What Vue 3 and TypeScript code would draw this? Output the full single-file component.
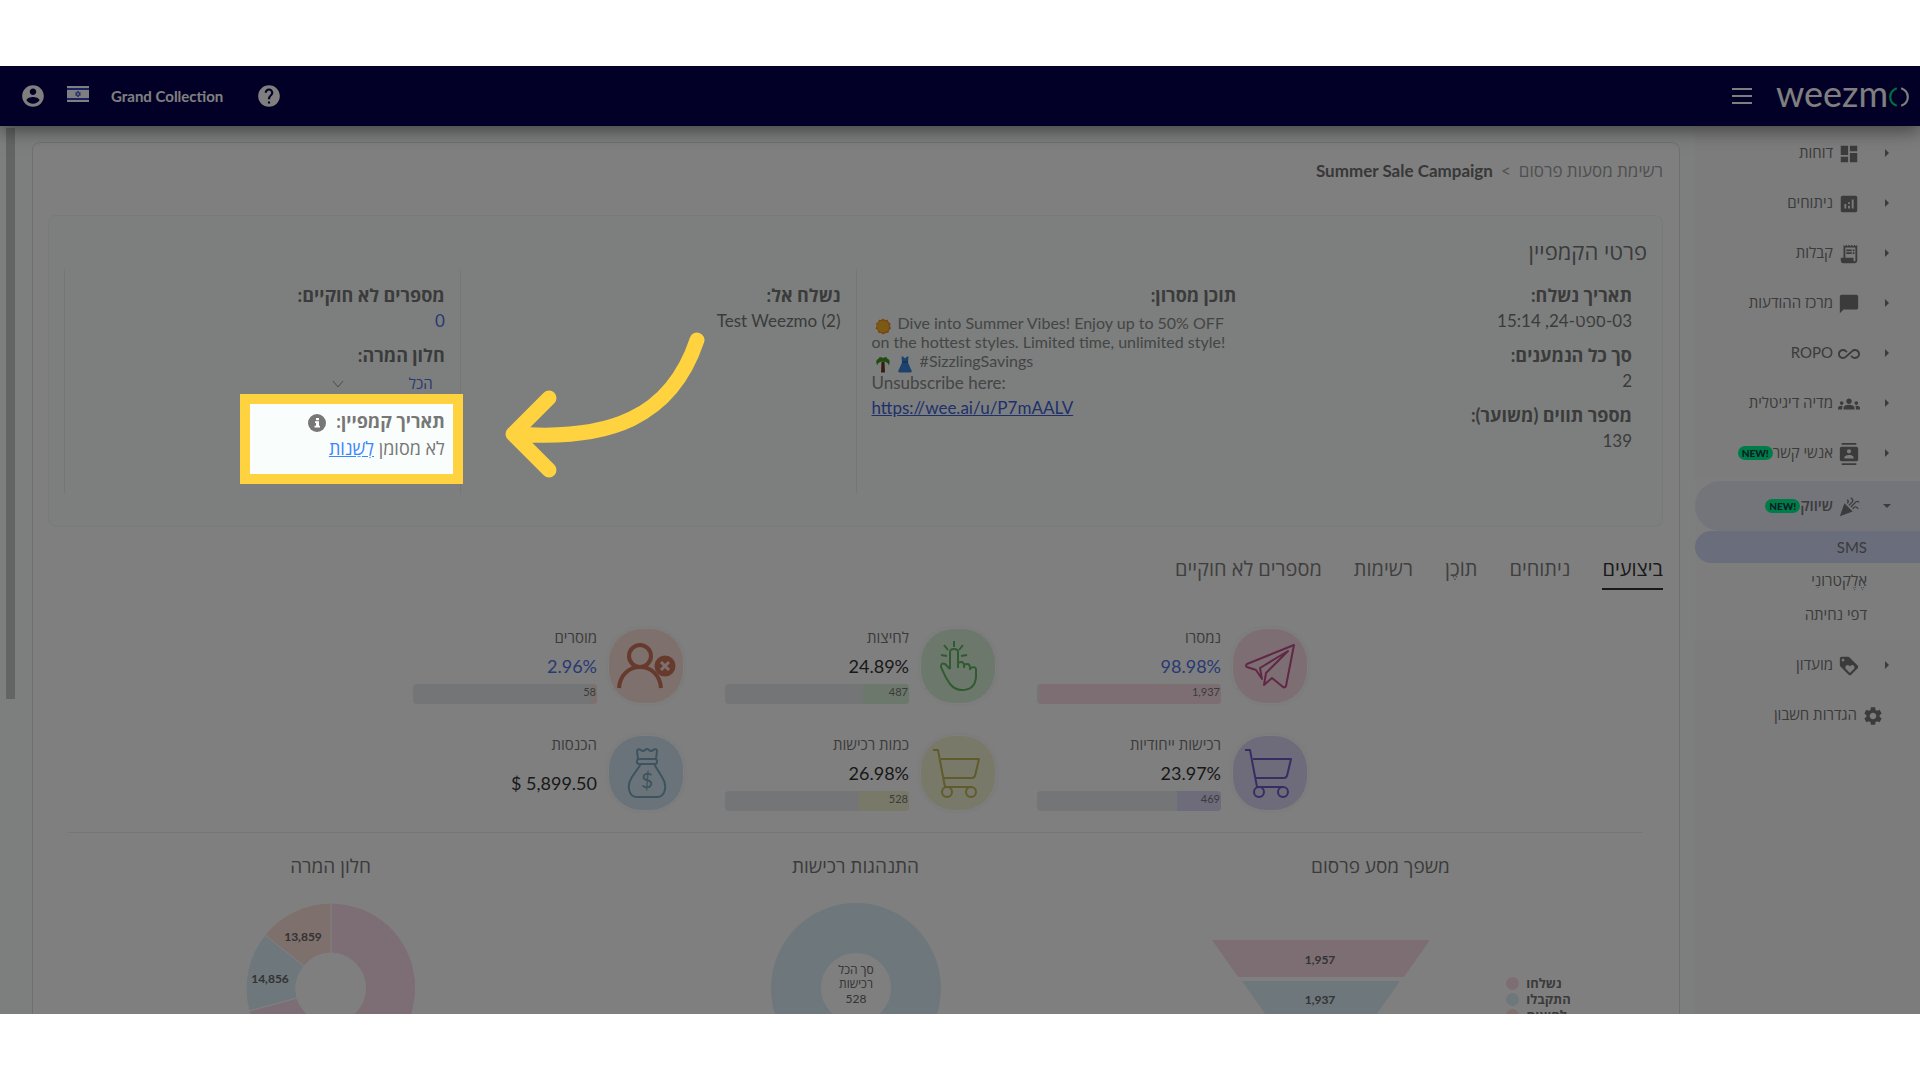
<script setup lang="ts">
interface NavItem {
  label: string
  icon: string
  badge?: boolean
}

interface Metric {
  label: string
  value: string
  kind: string
  count?: string
  share: number
  link?: boolean
}

const icons: Record<string, string> = {
  account:
    'M12 2C6.48 2 2 6.48 2 12s4.48 10 10 10 10-4.48 10-10S17.52 2 12 2zm0 3c1.66 0 3 1.34 3 3s-1.34 3-3 3-3-1.34-3-3 1.34-3 3-3zm0 14.2c-2.5 0-4.71-1.28-6-3.22.03-1.99 4-3.08 6-3.08 1.99 0 5.97 1.09 6 3.08-1.29 1.94-3.5 3.22-6 3.22z',
  help: 'M12 2C6.48 2 2 6.48 2 12s4.48 10 10 10 10-4.48 10-10S17.52 2 12 2zm1 17h-2v-2h2v2zm2.07-7.75l-.9.92C13.45 12.9 13 13.5 13 15h-2v-.5c0-1.1.45-2.1 1.17-2.83l1.24-1.26c.37-.36.59-.86.59-1.41 0-1.1-.9-2-2-2s-2 .9-2 2H8c0-2.21 1.79-4 4-4s4 1.79 4 4c0 .88-.36 1.68-.93 2.25z',
  dashboard: 'M3 13h8V3H3v10zm0 8h8v-6H3v6zm10 0h8V11h-8v10zm0-18v6h8V3h-8z',
  analytics:
    'M19 3H5c-1.1 0-2 .9-2 2v14c0 1.1.9 2 2 2h14c1.1 0 2-.9 2-2V5c0-1.1-.9-2-2-2zM9 17H7v-5h2v5zm4 0h-2v-3h2v3zm0-5h-2v-2h2v2zm4 5h-2V7h2v10z',
  receipt:
    'M19.5 3.5L18 2l-1.5 1.5L15 2l-1.5 1.5L12 2l-1.5 1.5L9 2 7.5 3.5 6 2v14H3v3c0 1.66 1.34 3 3 3h12c1.66 0 3-1.34 3-3V2l-1.5 1.5zM19 19c0 .55-.45 1-1 1s-1-.45-1-1v-3H8V5h11v14zM9 7h6v2H9zM16 7h2v2h-2zM9 10h6v2H9zM16 10h2v2h-2z',
  chat: 'M20 2H4c-1.1 0-1.99.9-1.99 2L2 22l4-4h14c1.1 0 2-.9 2-2V4c0-1.1-.9-2-2-2z',
  infinity:
    'M18.6 6.62c-1.44 0-2.8.56-3.77 1.53L12 10.66 10.48 12h.01L7.8 14.39c-.64.64-1.49.99-2.4.99-1.87 0-3.39-1.51-3.39-3.38S3.53 8.62 5.4 8.62c.91 0 1.76.35 2.44 1.03l1.13 1 1.51-1.34L9.22 8.2C8.2 7.18 6.84 6.62 5.4 6.62 2.42 6.62 0 9.04 0 12s2.42 5.38 5.4 5.38c1.44 0 2.8-.56 3.77-1.53l2.83-2.5.01.01L13.52 12h-.01l2.69-2.39c.64-.64 1.49-.99 2.4-.99 1.87 0 3.39 1.51 3.39 3.38s-1.52 3.38-3.39 3.38c-.9 0-1.76-.35-2.44-1.03l-1.14-1.01-1.51 1.34 1.27 1.12c1.02 1.01 2.37 1.57 3.82 1.57 2.98 0 5.4-2.41 5.4-5.38s-2.42-5.37-5.4-5.37z',
  groups:
    'M12 12.75c1.63 0 3.07.39 4.24.9 1.08.48 1.76 1.56 1.76 2.73V18H6v-1.61c0-1.18.68-2.26 1.76-2.73 1.17-.52 2.61-.91 4.24-.91zM4 13c1.1 0 2-.9 2-2s-.9-2-2-2-2 .9-2 2 .9 2 2 2zm1.13 1.1c-.37-.06-.74-.1-1.13-.1-.99 0-1.93.21-2.78.58C.48 14.9 0 15.62 0 16.43V18h4.5v-1.61c0-.83.23-1.61.63-2.29zM20 13c1.1 0 2-.9 2-2s-.9-2-2-2-2 .9-2 2 .9 2 2 2zm4 3.43c0-.81-.48-1.53-1.22-1.85-.85-.37-1.79-.58-2.78-.58-.39 0-.76.04-1.13.1.4.68.63 1.46.63 2.29V18H24v-1.57zM12 6c1.66 0 3 1.34 3 3s-1.34 3-3 3-3-1.34-3-3 1.34-3 3-3z',
  contacts:
    'M20 0H4v2h16V0zM4 24h16v-2H4v2zM20 4H4c-1.1 0-2 .9-2 2v12c0 1.1.9 2 2 2h16c1.1 0 2-.9 2-2V6c0-1.1-.9-2-2-2zm-8 2.75c1.24 0 2.25 1.01 2.25 2.25s-1.01 2.25-2.25 2.25S9.75 10.24 9.75 9 10.76 6.75 12 6.75zM17 17H7v-1.5c0-1.67 3.33-2.5 5-2.5s5 .83 5 2.5V17z',
  celebration:
    'M2 22l14-5-9-9zM14.53 12.53l5.59-5.59c.49-.49 1.28-.49 1.77 0l.59.59 1.06-1.06-.59-.59c-1.07-1.07-2.82-1.07-3.89 0l-5.59 5.59 1.06 1.06zM10.06 6.88l-.59.59 1.06 1.06.59-.59c1.07-1.07 1.07-2.82 0-3.89l-.59-.59-1.06 1.07.59.59c.48.48.48 1.28 0 1.76zM17.06 11.88l-1.59 1.59 1.06 1.06 1.59-1.59c.49-.49 1.28-.49 1.77 0l1.61 1.61 1.06-1.06-1.61-1.61c-1.08-1.07-2.82-1.07-3.89 0zM15.06 5.88l-3.59 3.59 1.06 1.06 3.59-3.59c1.07-1.07 1.07-2.82 0-3.89l-1.59-1.59-1.06 1.06 1.59 1.59c.48.49.48 1.29 0 1.77z',
  loyalty:
    'M21.41 11.58l-9-9C12.05 2.22 11.55 2 11 2H4c-1.1 0-2 .9-2 2v7c0 .55.22 1.05.59 1.42l9 9c.36.36.86.58 1.41.58.55 0 1.05-.22 1.41-.59l7-7c.37-.36.59-.86.59-1.41 0-.55-.23-1.06-.59-1.42zM5.5 7C4.67 7 4 6.33 4 5.5S4.67 4 5.5 4 7 4.67 7 5.5 6.33 7 5.5 7zm11.77 8.27L13 19.54l-4.27-4.27C8.28 14.81 8 14.19 8 13.5c0-1.38 1.12-2.5 2.5-2.5.69 0 1.32.28 1.77.74l.73.72.73-.73c.45-.45 1.08-.73 1.77-.73 1.38 0 2.5 1.12 2.5 2.5 0 .69-.28 1.32-.73 1.77z',
  settings:
    'M19.14 12.94c.04-.3.06-.61.06-.94 0-.32-.02-.64-.07-.94l2.03-1.58c.18-.14.23-.41.12-.61l-1.92-3.32c-.12-.22-.37-.29-.59-.22l-2.39.96c-.5-.38-1.03-.7-1.62-.94l-.36-2.54c-.04-.24-.24-.41-.48-.41h-3.84c-.24 0-.43.17-.47.41l-.36 2.54c-.59.24-1.13.57-1.62.94l-2.39-.96c-.22-.08-.47 0-.59.22L2.74 8.87c-.12.21-.08.47.12.61l2.03 1.58c-.05.3-.09.63-.09.94s.02.64.07.94l-2.03 1.58c-.18.14-.23.41-.12.61l1.92 3.32c.12.22.37.29.59.22l2.39-.96c.5.38 1.03.7 1.62.94l.36 2.54c.05.24.24.41.48.41h3.84c.24 0 .44-.17.47-.41l.36-2.54c.59-.24 1.13-.56 1.62-.94l2.39.96c.22.08.47 0 .59-.22l1.92-3.32c.12-.22.07-.47-.12-.61l-2.01-1.58zM12 15.6c-1.98 0-3.6-1.62-3.6-3.6s1.62-3.6 3.6-3.6 3.6 1.62 3.6 3.6-1.62 3.6-3.6 3.6z',
}

const navItems: NavItem[] = [
  { label: 'דוחות', icon: 'dashboard' },
  { label: 'ניתוחים', icon: 'analytics' },
  { label: 'קבלות', icon: 'receipt' },
  { label: 'מרכז ההודעות', icon: 'chat' },
  { label: 'ROPO', icon: 'infinity' },
  { label: 'מדיה דיגיטלית', icon: 'groups' },
  { label: 'אנשי קשר', icon: 'contacts', badge: true },
]

const subItems = ['SMS', 'אֶלֶקטרוֹנִי', 'דפי נחיתה']
const tabs = ['ביצועים', 'ניתוחים', 'תוֹכֶן', 'רשימות', 'מספרים לא חוקיים']

const metrics: Metric[] = [
  { label: 'נמסרו', value: '98.98%', kind: 'sent', count: '1,937', share: 99, link: true },
  { label: 'לחיצות', value: '24.89%', kind: 'clicks', count: '487', share: 25 },
  { label: 'מוסרים', value: '2.96%', kind: 'removed', count: '58', share: 3, link: true },
  { label: 'רכישות ייחודיות', value: '23.97%', kind: 'unique', count: '469', share: 24 },
  { label: 'כמות רכישות', value: '26.98%', kind: 'orders', count: '528', share: 27 },
  { label: 'הכנסות', value: '$ 5,899.50', kind: 'revenue', share: 0 },
]

const legend = [
  { label: 'נשלחו', tone: 'tone-pink' },
  { label: 'התקבלו', tone: 'tone-blue' },
  { label: 'לחיצות', tone: 'tone-coral' },
]
</script>

<template>
  <div class="stage">
    <header class="topbar">
      <div class="account">
        <button class="icon-btn" type="button" aria-label="Account">
          <svg class="i26" viewBox="0 0 24 24"><path :d="icons.account" /></svg>
        </button>
        <button class="icon-btn flag" type="button" aria-label="Language">
          <svg viewBox="0 0 22 16">
            <rect width="22" height="16" fill="#fff" />
            <rect y="2" width="22" height="2" fill="#2f45c8" />
            <rect y="12" width="22" height="2" fill="#2f45c8" />
            <path d="M11 5l2.4 4.2H8.600zM11 11L8.600 6.800h4.800z" fill="none" stroke="#2f45c8" stroke-width=".8" />
          </svg>
        </button>
        <span class="org">Grand Collection</span>
        <button class="icon-btn" type="button" aria-label="Help">
          <svg class="i26" viewBox="0 0 24 24"><path :d="icons.help" /></svg>
        </button>
      </div>
      <div class="brand">
        <button class="burger" type="button" aria-label="Menu"><i></i><i></i><i></i></button>
        <a class="logo" href="#">
          <span>weezm</span>
          <svg viewBox="0 0 20 20">
            <path d="M8 2C0 5 0 15 8 18" stroke="#00e083" />
            <path d="M12 2C20 5 20 15 12 18" stroke="#fff" />
          </svg>
        </a>
      </div>
    </header>

    <div class="body" dir="rtl">
      <nav class="sidebar">
        <a v-for="item in navItems" :key="item.label" class="nav-item" href="#">
          <i class="caret"></i>
          <svg viewBox="0 0 24 24"><path fill-rule="evenodd" :d="icons[item.icon]" /></svg>
          <span>{{ item.label }}</span>
          <em v-if="item.badge" class="badge" dir="ltr">NEW!</em>
        </a>
        <div class="nav-group">
          <a class="nav-item open" href="#">
            <i class="caret down"></i>
            <svg viewBox="0 0 24 24"><path :d="icons.celebration" /></svg>
            <span>שיווק</span>
            <em class="badge" dir="ltr">NEW!</em>
          </a>
          <a v-for="(sub, n) in subItems" :key="sub" class="sub-item" :class="{ current: n === 0 }" href="#">{{ sub }}</a>
        </div>
        <a class="nav-item" href="#">
          <i class="caret"></i>
          <svg viewBox="0 0 24 24"><path :d="icons.loyalty" /></svg>
          <span>מועדון</span>
        </a>
        <a class="nav-item leaf" href="#">
          <svg viewBox="0 0 24 24"><path :d="icons.settings" /></svg>
          <span>הגדרות חשבון</span>
        </a>
      </nav>

      <main class="card">
        <div class="crumbs">
          <a href="#">רשימת מסעות פרסום</a>
          <span>&gt;</span>
          <strong>Summer Sale Campaign</strong>
        </div>

        <section class="details">
          <h2>פרטי הקמפיין</h2>
          <div class="cols">
            <div class="col">
              <div class="field"><b>תאריך נשלח:</b><span>03-ספט-24, 15:14</span></div>
              <div class="field"><b>סך כל הנמענים:</b><span>2</span></div>
              <div class="field"><b>מספר תווים (משוער):</b><span>139</span></div>
            </div>
            <div class="col">
              <div class="field">
                <b>תוכן מסרון:</b>
                <div class="message" dir="ltr">
                  <p>
                    <svg class="emoji" viewBox="0 0 16 16">
                      <path d="M8 0l2 1.500 2.500-.3 1 2.300 2 1.500-.5 2.500 1 2.500-2 1.700-.5 2.500-2.500.4L8 16l-2.200-1.400-2.500-.4-.6-2.500L.6 10l1-2.500-.5-2.500 2-1.500 1-2.300L6 1.500z" fill="#f08a24" />
                      <circle cx="8" cy="8" r="6" fill="#f5b52a" />
                    </svg>
                    Dive into Summer Vibes! Enjoy up to 50% OFF<br />on the hottest styles. Limited time, unlimited style!<br />
                    <svg class="emoji" viewBox="0 0 16 16">
                      <path d="M6.500 5h3l.5 11H6z" fill="#6b3a22" />
                      <path d="M8 5C5 5 2 7 2.500 9 .5 6 1 3 4 2c-1-1 3-2 4 0 1-2 5-1 4 0 3 1 3.500 4 1.500 7C14 7 11 5 8 5z" fill="#3c9a1e" />
                    </svg>
                    <svg class="emoji" viewBox="0 0 16 16">
                      <path d="M4.500 0h1.500l2 2 2-2h1.500l-.5 6 4 9-1.500 1H2.500L1 15l4-9z" fill="#3d84dc" />
                      <rect x="5" y="5" width="6" height="1" fill="#234f9e" />
                    </svg>
                    #SizzlingSavings
                  </p>
                  <p class="large">Unsubscribe here:</p>
                  <p class="large"><a href="#">https://wee.ai/u/P7mAALV</a></p>
                </div>
              </div>
            </div>
            <div class="col">
              <div class="field"><b>נשלח אל:</b><span><bdi>Test Weezmo (2)</bdi></span></div>
            </div>
            <div class="col">
              <div class="field"><b>מספרים לא חוקיים:</b><span class="accent">0</span></div>
              <div class="field window">
                <label for="window">חלון המרה:</label>
                <span class="select">
                  <select id="window"><option>הכל</option></select>
                  <svg viewBox="0 0 12 8"><path d="M1 1l5 6 5-6" /></svg>
                </span>
              </div>
              <div class="field date">
                <b>
                  תאריך קמפיין:
                  <svg class="info" viewBox="0 0 18 18">
                    <circle cx="9" cy="9" r="9" />
                    <path d="M8 4h3v2.200H8zM7 7.200h4v4.600h1v1.700H6.500v-1.700H8V9H7z" fill="#fff" />
                  </svg>
                </b>
                <span class="unset">לא מסומן <a href="#">לְשַׁנוֹת</a></span>
                <div class="spotlight"></div>
                <svg class="arrow" viewBox="0 0 216 166">
                  <path d="M198 15C172 93 110 116 16 109M50 73L14 109L50 145" />
                </svg>
              </div>
            </div>
          </div>
        </section>

        <div class="tabs" role="tablist">
          <button v-for="(tab, n) in tabs" :key="tab" type="button" role="tab" :aria-selected="n === 0">{{ tab }}</button>
        </div>

        <section class="metrics">
          <article v-for="m in metrics" :key="m.label" class="metric" :class="m.kind">
            <div class="bubble">
              <svg v-if="m.kind === 'sent'" viewBox="0 0 74 74" stroke-width="2">
                <path d="M61 16L14 35q-2 2 0 3l9 3 6 9-2-11L55 22 33 44l-2 12 8-7 11 9q2 1 3-1z" />
              </svg>
              <svg v-else-if="m.kind === 'clicks'" viewBox="0 0 74 74" stroke-width="2">
                <path d="M29 40V23q0-3 4-3t4 3v16M29 40l-5-5q-4-2-4 3 4 10 9 17 5 6 12 6 13 0 14-13V40q-1-3-6-1M37 34q6-3 6 3v2M43 36q6-3 6 3v2M33 12v6M23 16l4 5M42 16l-4 5M20 26l6 1M46 26l-6 1" />
              </svg>
              <svg v-else-if="m.kind === 'removed'" viewBox="0 0 74 74" stroke-width="4" stroke-linecap="butt">
                <circle cx="31" cy="27" r="11" />
                <path d="M10 59C11 46 20 38 31 38s20 8 21 21" />
                <circle cx="56" cy="37" r="9" fill="currentColor" stroke-width="3" />
                <path d="M52 33l8 8M60 33l-8 8" stroke="#fbe0da" stroke-width="3" />
              </svg>
              <svg v-else-if="m.kind === 'revenue'" viewBox="0 0 74 74" stroke-width="2">
                <path d="M29 23l-1-8q1-3 4-1 2 2 4 0 2-2 4 0t4 0q4-2 4 1l-1 8M32 28L23 41c-6 9-3 20 5 20h20c8 0 11-11 5-20L45 28M32 28h3M37 28h1M40 28h5" />
                <rect x="28" y="23" width="20" height="5" rx="2" />
                <text x="38" y="52">$</text>
              </svg>
              <svg v-else viewBox="0 0 74 74" stroke-width="2">
                <path d="M12 14h5l7 37h27M20 23h38l-4 17q-1 2-3 2H23" />
                <circle cx="26" cy="56" r="5" />
                <circle cx="50" cy="56" r="5" />
              </svg>
            </div>
            <div class="figures">
              <span class="name">{{ m.label }}</span>
              <span class="value" :class="{ accent: m.link }" dir="ltr">{{ m.value }}</span>
              <div v-if="m.count" class="bar">
                <i :style="{ width: m.share + '%' }"></i>
                <small>{{ m.count }}</small>
              </div>
            </div>
          </article>
        </section>

        <section class="charts">
          <div class="chart">
            <h3>משפך מסע פרסום</h3>
            <div class="funnel" dir="ltr">
              <svg viewBox="0 0 218 150">
                <path d="M0 0h218l-26 37H26z" fill="#fadce8" />
                <path d="M30 41h158l-26 37H56z" fill="#dceef8" />
                <path d="M59 82h100l-26 37H85z" fill="#fbe0da" />
                <text x="108" y="24">1,957</text>
                <text x="108" y="64">1,937</text>
              </svg>
              <ul>
                <li v-for="l in legend" :key="l.label"><i :class="l.tone"></i>{{ l.label }}</li>
              </ul>
            </div>
          </div>
          <div class="chart">
            <h3>התנהגות רכישות</h3>
            <svg class="donut" viewBox="0 0 170 170">
              <circle cx="85" cy="85" r="60" fill="none" stroke="#dceef8" stroke-width="50" />
              <g class="total">
                <text x="85" y="71">סך הכל</text>
                <text x="85" y="85">רכישות</text>
                <text x="85" y="100">528</text>
              </g>
            </svg>
          </div>
          <div class="chart">
            <h3>חלון המרה</h3>
            <svg class="donut" viewBox="0 0 170 170">
              <g stroke="#fff" stroke-width="1">
                <path d="M85 0A85 85 0 1 1 3 108L51 95A35 35 0 1 0 85 50z" fill="#fadcea" />
                <path d="M3 108A85 85 0 0 1 19 32L58 63A35 35 0 0 0 51 95z" fill="#dceef8" />
                <path d="M19 32A85 85 0 0 1 85 0V50A35 35 0 0 0 58 63z" fill="#fbe0da" />
              </g>
              <text x="57" y="38">13,859</text>
              <text x="24" y="80">14,856</text>
            </svg>
          </div>
        </section>
      </main>

      <div class="scroll"><i></i></div>
    </div>
  </div>
</template>

<style>
body {
  margin: 0;
  background: #fff;
}
</style>

<style scoped>
.stage {
  box-sizing: border-box;
  height: calc(100vh - 132px);
  margin: 66px 0;
  overflow: hidden;
  position: relative;
  display: flex;
  flex-direction: column;
  background: #f9fefc;
  color: #777;
  font: 17px/25px Lato, "Open Sans", "Noto Sans", sans-serif;
}
a {
  color: inherit;
  text-decoration: none;
}
button {
  padding: 0;
  border: 0;
  background: none;
  color: inherit;
  font: inherit;
}
h2,
h3,
p,
ul {
  margin: 0;
  padding: 0;
}
svg {
  fill: currentColor;
}

.topbar {
  height: 60px;
  flex: none;
  display: flex;
  justify-content: space-between;
  align-items: center;
  padding: 0 10px 0 20px;
  background: #04004c;
  color: #fff;
  box-shadow: 0 4px 18px rgba(0, 0, 0, 0.5);
  position: relative;
}
.account,
.brand,
.logo {
  display: flex;
  align-items: center;
}
.icon-btn {
  display: flex;
}
.i26 {
  width: 26px;
  height: 26px;
}
.flag {
  margin: 0 22px 4px 21px;
}
.flag svg {
  width: 22px;
  height: 16px;
}
.org {
  margin-right: 33px;
  font-size: 15px;
  font-weight: 700;
}
.burger {
  display: grid;
  gap: 5px;
  width: 20px;
  margin-right: 24px;
}
.burger i {
  height: 2px;
  background: #fff;
}
.logo {
  font-size: 36px;
  line-height: 40px;
  padding-bottom: 6px;
}
.logo svg {
  width: 22px;
  height: 22px;
  margin-top: 7px;
  fill: none;
  stroke-width: 2;
}

.body {
  flex: 1 0 auto;
  display: flex;
}
.sidebar {
  width: 225px;
  flex: none;
  padding-top: 2px;
  background: #f9f9f9;
  font-size: 15px;
}
.nav-item {
  display: flex;
  align-items: center;
  height: 50px;
  padding-right: 31px;
}
.nav-item span {
  padding-bottom: 2px;
}
.nav-item svg {
  width: 22px;
  height: 22px;
  margin: 2px 25px 0 5px;
}
.caret {
  border: 4px solid transparent;
  border-left-color: #777;
  border-right-width: 0;
}
.caret.down {
  border: 4px solid transparent;
  border-top-color: #777;
  border-bottom-width: 0;
  margin: 0 -2px;
}
.badge {
  height: 14px;
  padding: 0 4px;
  border-radius: 7px;
  background: #00f890;
  color: #0a3a4a;
  font-size: 10px;
  line-height: 14px;
  font-style: normal;
  font-weight: 900;
}
.nav-group {
  padding: 3px 0 9px;
  background: #fbfbfb;
}
.open {
  border-radius: 25px 0 0 25px;
  background: #e6ebf7;
  font-weight: 600;
}
.sub-item {
  display: block;
  height: 34px;
  padding-right: 53px;
  line-height: 34px;
}
.sub-item.current {
  height: 32px;
  line-height: 32px;
  border-radius: 16px 0 0 16px;
  background: #d4dcf8;
}
.leaf {
  padding-right: 36px;
}
.leaf svg {
  margin-right: 0;
}

.card {
  flex: 1;
  min-width: 0;
  box-sizing: border-box;
  margin: 16px 15px 0;
  padding: 15px 16px 16px 15px;
  border: 1px solid #dde3e1;
  border-radius: 8px;
  background: #fff;
}
.crumbs {
  display: flex;
  gap: 8px;
  align-items: center;
  height: 25px;
}
.crumbs a,
.crumbs span {
  color: #a0a0a0;
}
.crumbs strong {
  color: #707070;
}
.details {
  margin-top: 32px;
  padding: 21px 15px 32px;
  border: 1px solid #f0f4f2;
  border-radius: 8px;
  background: #f9fefc;
}
h2,
h3 {
  font-size: 22px;
  line-height: 30px;
  font-weight: 400;
}
h3 {
  font-size: 19px;
}
.cols {
  display: grid;
  grid-template-columns: repeat(4, 1fr);
  margin-top: 2px;
}
.col {
  height: 211px;
  padding: 14px 15px 0;
  border-left: 1px solid #ebefed;
}
.col:first-child {
  border-left-color: transparent;
}
.field {
  display: flex;
  flex-direction: column;
  margin-bottom: 10px;
}
.field b,
.field label {
  font-size: 18px;
  font-weight: 700;
}
.accent {
  color: #5273e6;
}
.message {
  margin-top: 5px;
  font-size: 16px;
  line-height: 19px;
  text-align: left;
  color: #8a8a8a;
}
.message .large {
  font-size: 17px;
  line-height: 25px;
}
.message a {
  color: #3f62d8;
  text-decoration: underline;
}
.emoji {
  width: 16px;
  height: 17px;
  margin: -3px 3px;
  vertical-align: -3px;
}
.select {
  display: flex;
  align-items: center;
  gap: 8px;
  height: 31px;
  padding-right: 12px;
}
.select select {
  width: 81px;
  padding: 0;
  border: 0;
  appearance: none;
  background: none;
  color: #5273e6;
  font: 15px/25px "Open Sans", sans-serif;
}
.select svg {
  width: 12px;
  height: 8px;
  fill: none;
  stroke: #999;
}
.date {
  position: relative;
  gap: 2px;
}
.date a {
  color: #3d86ff;
  text-decoration: underline;
}
.unset {
  font-size: 18px;
}
.info {
  width: 18px;
  height: 18px;
  margin-right: 6px;
  vertical-align: -4px;
}
.spotlight {
  position: absolute;
  z-index: 5;
  top: -15px;
  right: -18px;
  width: 203px;
  height: 70px;
  border: 10px solid #ffd23f;
  box-shadow: 0 0 0 3000px rgba(0, 0, 0, 0.5);
}
.arrow {
  position: absolute;
  z-index: 6;
  top: -84px;
  right: -270px;
  width: 216px;
  height: 166px;
  fill: none;
  stroke: #ffd23f;
  stroke-width: 15;
  stroke-linecap: round;
  stroke-linejoin: round;
}

.tabs {
  display: flex;
  gap: 32px;
  margin-top: 25px;
}
.tabs button {
  padding: 4px 0 7px;
  border-bottom: 2px solid transparent;
  font-size: 20px;
  line-height: 25px;
  color: #808080;
}
.tabs button[aria-selected="true"] {
  border-color: #333;
  color: #333;
}

.metrics {
  display: grid;
  grid-template-columns: repeat(3, 271px);
  gap: 31px 41px;
  justify-content: center;
  margin-top: 38px;
  padding-left: 10px;
}
.metric {
  display: flex;
  gap: 11px;
  height: 76px;
}
.bubble {
  flex: none;
  width: 76px;
  border-radius: 34px;
  border: 1px solid #fff;
  box-sizing: border-box;
  box-shadow: 0 0 5px 1px #f0f4f0;
  background-clip: padding-box;
}
.bubble svg {
  display: block;
  width: 74px;
  height: 74px;
  fill: none;
  stroke: currentColor;
  stroke-linejoin: round;
}
.bubble text {
  fill: currentColor;
  stroke: none;
  font-size: 21px;
}
.sent .bubble {
  background: #fadde8;
  color: #c0508a;
}
.clicks .bubble {
  background: #d8f0d8;
  color: #60b460;
}
.removed .bubble {
  background: #fbe0da;
  color: #cc745a;
}
.unique .bubble {
  background: #dcd8f6;
  color: #6c5cc4;
}
.orders .bubble {
  background: #f2f2d2;
  color: #c0b458;
}
.revenue .bubble {
  background: #d2e6f2;
  color: #7ba6ba;
}
.figures {
  flex: 1;
  display: flex;
  flex-direction: column;
}
.name {
  font-size: 15px;
  line-height: 18px;
}
.value {
  margin: 8px 0 5px;
  font-size: 18px;
  line-height: 25px;
  text-align: right;
  color: #333;
}
.value.accent {
  color: #5273e6;
}
.revenue .value {
  margin-top: 18px;
}
.bar {
  position: relative;
  height: 20px;
  border-radius: 4px;
  overflow: hidden;
  background: #e8eaee;
}
.bar i {
  display: block;
  height: 100%;
  background: #dcd8f6;
}
.bar small {
  position: absolute;
  top: 0;
  right: 1px;
  font-size: 11px;
  line-height: 16px;
  color: #777;
}
.sent .bar i {
  background: #fadde8;
}
.clicks .bar i {
  background: #d8f0d8;
}
.removed .bar i {
  background: #fbe0da;
}
.orders .bar i {
  background: #f2f2d2;
}

.charts {
  display: grid;
  grid-template-columns: repeat(3, 1fr);
  margin: 21px 20px 0;
  padding-top: 18px;
  border-top: 1px solid #ececec;
}
.chart {
  display: flex;
  flex-direction: column;
  align-items: center;
}
.chart svg {
  font-size: 12px;
  font-weight: 700;
}
text {
  text-anchor: middle;
  fill: #666;
}
.total text {
  font-weight: 400;
}
.donut {
  width: 170px;
  height: 170px;
  margin-top: 22px;
}
.funnel {
  display: flex;
  gap: 76px;
  margin-top: 59px;
  padding-left: 22px;
}
.funnel svg {
  width: 218px;
  height: 150px;
}
.funnel ul {
  list-style: none;
  padding-top: 35px;
  font-size: 13px;
  line-height: 16px;
  font-weight: 700;
}
.funnel li {
  display: flex;
  align-items: center;
  gap: 7px;
}
.funnel li i {
  width: 13px;
  height: 13px;
  border-radius: 50%;
}
.tone-pink {
  background: #fadde8;
}
.tone-blue {
  background: #dceef8;
}
.tone-coral {
  background: #fbe0da;
}

.scroll {
  width: 9px;
  flex: none;
  padding: 2px 2px 0 6px;
}
.scroll i {
  display: block;
  height: 571px;
  background: #c6cac8;
}
</style>
